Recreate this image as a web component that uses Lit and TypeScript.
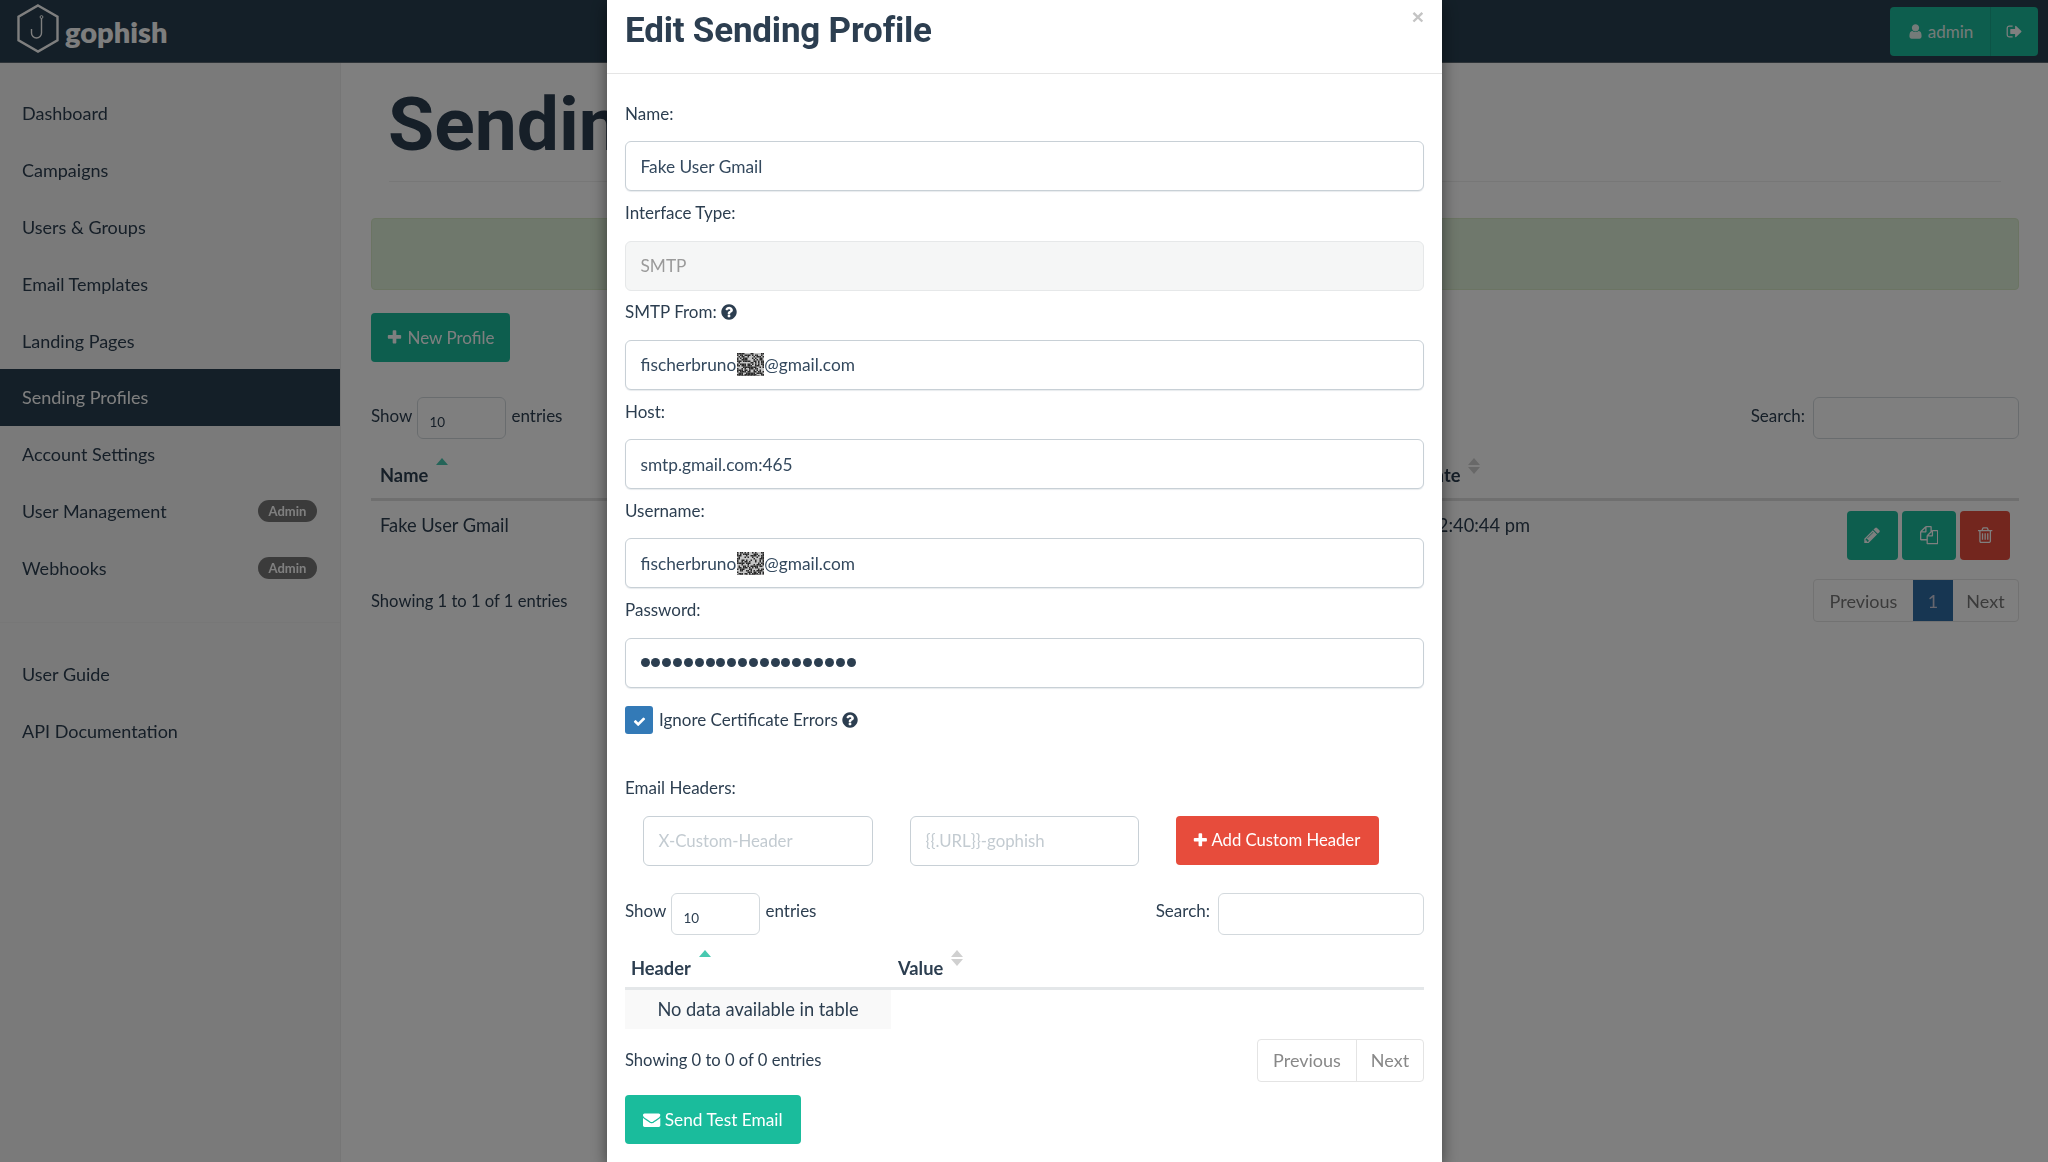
import { LitElement, html, css, svg } from "lit";
import { customElement } from "lit/decorators.js";

const P = {
  plus: "M1600 736v192q0 40-28 68t-68 28h-416v416q0 40-28 68t-68 28h-192q-40 0-68-28t-28-68v-416h-416q-40 0-68-28t-28-68v-192q0-40 28-68t68-28h416v-416q0-40 28-68t68-28h192q40 0 68 28t28 68v416h416q40 0 68 28t28 68z",
  user: "M1536 1399q0 109-62.5 187t-150.5 78h-854q-88 0-150.5-78t-62.5-187q0-85 8.5-160.5t31.5-152 58.5-131 94-89 134.5-34.5q131 128 313 128t313-128q76 0 134.5 34.5t94 89 58.5 131 31.5 152 8.5 160.5zm-256-887q0 159-112.5 271.5t-271.5 112.5-271.5-112.5-112.5-271.5 112.5-271.5 271.5-112.5 271.5 112.5 112.5 271.5z",
  out: "M704 1440q0 4 1 20t.5 26.5-3 23.5-10 19.5-20.5 6.5h-320q-119 0-203.5-84.5t-84.5-203.5v-704q0-119 84.5-203.5t203.5-84.5h320q13 0 22.5 9.5t9.5 22.5q0 4 1 20t.5 26.5-3 23.5-10 19.5-20.5 6.5h-320q-66 0-113 47t-47 113v704q0 66 47 113t113 47h312l11.5 1 11.5 3 8 5.5 7 9 2 13.5zm928-544q0 26-19 45l-544 544q-19 19-45 19t-45-19-19-45v-288h-448q-26 0-45-19t-19-45v-384q0-26 19-45t45-19h448v-288q0-26 19-45t45-19 45 19l544 544q19 19 19 45z",
  help: "M1024 1376v-192q0-14-9-23t-23-9h-192q-14 0-23 9t-9 23v192q0 14 9 23t23 9h192q14 0 23-9t9-23zm256-672q0-88-55.5-163t-138.5-116-170-41q-243 0-371 213-15 24 8 42l132 100q7 6 19 6 16 0 25-12 53-68 86-92 34-24 86-24 48 0 85.5 26t37.5 59q0 38-20 61t-68 45q-63 28-115.5 86.5t-52.5 125.5v36q0 14 9 23t23 9h192q14 0 23-9t9-23q0-19 21.5-49.5t54.5-49.5q32-18 49-28.5t46-35 44.5-48 28-60.5 12.5-81zm384 192q0 209-103 385.5t-279.5 279.5-385.5 103-385.5-103-279.5-279.5-103-385.5 103-385.5 279.5-279.5 385.5-103 385.5 103 279.5 279.5 103 385.5z",
  pencil: "M491 1536l91-91-235-235-91 91v107h128v128h107zm523-928q0-22-22-22-10 0-17 7l-542 542q-7 7-7 17 0 22 22 22 10 0 17-7l542-542q7-7 7-17zm-54-192l416 416-832 832h-416v-416zm683 96q0 53-37 90l-166 166-416-416 166-165q36-38 90-38 53 0 91 38l235 234q37 39 37 91z",
  files: "M1696 384q40 0 68 28t28 68v1216q0 40-28 68t-68 28h-960q-40 0-68-28t-28-68v-288h-544q-40 0-68-28t-28-68v-672q0-40 20-88t48-76l408-408q28-28 76-48t88-20h416q40 0 68 28t28 68v328q68-40 128-40h416zm-544 213l-299 299h299v-299zm-640-384l-299 299h299v-299zm196 647l316-316v-416h-384v416q0 40-28 68t-68 28h-416v640h512v-256q0-40 20-88t48-76zm956 804v-1152h-384v416q0 40-28 68t-68 28h-416v640h896z",
  trash: "M704 736v576q0 14-9 23t-23 9h-64q-14 0-23-9t-9-23v-576q0-14 9-23t23-9h64q14 0 23 9t9 23zm256 0v576q0 14-9 23t-23 9h-64q-14 0-23-9t-9-23v-576q0-14 9-23t23-9h64q14 0 23 9t9 23zm256 0v576q0 14-9 23t-23 9h-64q-14 0-23-9t-9-23v-576q0-14 9-23t23-9h64q14 0 23 9t9 23zm128 724v-948h-896v948q0 22 7 40.5t14.5 27 10.5 8.5h832q3 0 10.5-8.5t14.5-27 7-40.5zm-672-1076h448l-48-117q-7-9-17-11h-317q-10 2-17 11zm928 32v64q0 14-9 23t-23 9h-96v948q0 83-47 143.5t-113 60.5h-832q-66 0-113-58.5t-47-141.5v-952h-96q-14 0-23-9t-9-23v-64q0-14 9-23t23-9h309l70-167q15-37 54-63t79-26h320q40 0 79 26t54 63l70 167h309q14 0 23 9t9 23z",
  mail: "M1792 710v794q0 66-47 113t-113 47h-1472q-66 0-113-47t-47-113v-794q44 49 101 87 362 246 497 345 57 42 92.5 65.5t94.5 48 110 24.5h2q51 0 110-24.5t94.5-48 92.5-65.5q170-123 498-345 57-39 100-87zm0-294q0 79-49 151t-122 123q-376 261-468 325-10 7-42.5 30.5t-54 38-52 32.5-57.5 27-50 9h-2q-23 0-50-9t-57.5-27-52-32.5-54-38-42.5-30.5q-91-64-262-182.5t-205-142.5q-62-42-117-115.5t-55-136.5q0-78 41.5-130t118.5-52h1472q65 0 112.5 47t47.5 113z",
  check: "M1671 566q0 40-28 68l-724 724-136 136q-28 28-68 28t-68-28l-136-136-362-362q-28-28-28-68t28-68l136-136q28-28 68-28t68 28l294 295 656-657q28-28 68-28t68 28l136 136q28 28 28 68z",
};

const icon = (d: string, cls = "") => html`<svg class="ic ${cls}" viewBox="0 0 1792 1792" aria-hidden="true"><path fill="currentColor" d=${d}></path></svg>`;

function noise(seed: number) {
  let s = seed;
  const rects = [];
  for (let y = 0; y < 23; y += 1.5) {
    for (let x = 0; x < 27; x += 1.5) {
      s = (s * 1103515245 + 12345) & 0x7fffffff;
      if ((s >> 12) % 100 < 50) rects.push(svg`<rect x=${x} y=${y} width="1.5" height="1.5"></rect>`);
    }
  }
  return html`<svg class="noise" viewBox="0 0 27 23" aria-hidden="true"><rect width="27" height="23" fill="#c4c4c4"></rect><g fill="#2a2a2a">${rects}</g></svg>`;
}

const sorter = (active = false) => html`<span class="sort ${active ? "on" : ""}"><i class="up"></i>${active ? "" : html`<i class="down"></i>`}</span>`;

@customElement("app-root")
export class AppRoot extends LitElement {
  static styles = css`
    :host { display: block; width: 2048px; height: 1162px; overflow: hidden; position: relative; font-family: "Lato", "Liberation Sans", sans-serif; font-size: 17px; color: #2c3e50; background: #fff; }
    * { box-sizing: border-box; }
    .ic { width: 1em; height: 1em; display: inline-block; vertical-align: -0.12em; flex: none; }
    .page { filter: blur(0.5px); height: 1162px; }
    .top { height: 63px; background: #283f50; display: flex; align-items: center; justify-content: space-between; padding: 0 10px 0 17px; border-bottom: 1px solid #5b6770; }
    .brand { display: flex; align-items: center; gap: 6px; font: 800 29px Lato, sans-serif; color: #fdfdfd; }
    .brand svg { width: 42px; height: 49px; margin-top: -5px; }
    .account { display: flex; height: 49px; }
    .btn { background: #1abc9c; color: #fff; border: 0; border-radius: 4px; display: inline-flex; align-items: center; justify-content: center; font: inherit; gap: 4px; padding: 0; }
    .adm { width: 101px; border-radius: 4px 0 0 4px; border-right: 1px solid #18a88c; color: #e8f6f3; }
    .logout { width: 47px; border-radius: 0 4px 4px 0; }
    .layout { display: flex; height: 1099px; }
    .side { width: 341px; flex: none; background: #f5f5f5; border-right: 1px solid #ececec; padding-top: 21.5px; font-size: 18px; }
    .nav { height: 56.9px; display: flex; align-items: center; justify-content: space-between; padding: 0 23px 0 22px; color: #2c3e50; }
    .nav.on { background: #283f50; color: #fff; height: 57px; }
    .badge { width: 59px; height: 22px; border-radius: 11px; background: #777; color: #fff; font-size: 13px; font-weight: 700; display: flex; align-items: center; justify-content: center; }
    .sep { border-top: 1px solid #eee; margin-top: 25px; height: 24px; }
    .main { flex: 1; padding: 0 29px 0 30px; }
    .title { font: 700 75px/1 Roboto, sans-serif; margin: 24px 0 0 17px; height: 73px; white-space: nowrap; color: #2c3e50; }
    .rule { border-top: 1px solid #eee; margin: 21px 18px 0 18px; }
    .alert { height: 72px; margin-top: 36px; background: #dff0d8; border: 1px solid #d6e9c6; border-radius: 4px; }
    .new { width: 139px; height: 49px; margin-top: 23px; border-radius: 4px; }
    .tools { display: flex; align-items: flex-start; justify-content: space-between; }
    .len { display: flex; align-items: center; gap: 5px; }
    .sel { width: 89px; height: 42px; border: 1px solid #d3d9dd; border-radius: 6px; font-size: 13.5px; line-height: 17px; padding: 16px 0 0 11px; background: #fff; }
    .find { display: flex; align-items: center; gap: 8px; }
    .searchbox { width: 206px; height: 42px; border: 1px solid #d3d9dd; border-radius: 6px; background: #fff; }
    .t { position: relative; top: -3px; }
    .bgtools { margin-top: 35px; }
    .bgrow { display: flex; }
    .bghead { height: 62px; border-bottom: 3px solid #dfdfdf; align-items: flex-end; font-weight: 700; font-size: 18.3px; padding-bottom: 12px; }
    .bgname { padding-left: 9px; width: 948px; flex: none; }
    .bghead .bgname { width: 934px; }
    .sort { position: relative; display: inline-block; }
    .sort i { position: absolute; left: 8px; width: 0; height: 0; border-left: 6px solid transparent; border-right: 6px solid transparent; }
    .sort .up { top: -24px; border-bottom: 7px solid #d0d0d0; }
    .sort .down { top: -15px; border-top: 7px solid #d0d0d0; }
    .sort.on .up { border-bottom-color: #48c9b0; }
    .bgbody { height: 75px; padding-top: 10px; font-size: 18.3px; }
    .bgbody .bgname, .bgbody .date { padding-top: 3px; }
    .date { width: 211px; text-align: right; white-space: nowrap; flex: none; }
    .acts { display: flex; gap: 4px; margin: 0 9px 0 auto; }
    .acts .btn { height: 49px; }
    .a1 { width: 51px; } .a2 { width: 54px; } .a3 { width: 50px; background: #e74c3c; }
    .foot { display: flex; justify-content: space-between; align-items: center; margin-top: 3px; }
    .foot > span:first-child, .mfoot > span:first-child { font-size: 16.6px; }
    .pager { display: flex; height: 43px; border: 1px solid #e4e4e4; border-radius: 4px; color: #777; background: #fff; font-size: 18px; }
    .pager span { display: flex; align-items: center; justify-content: center; }
    .p1 { width: 99px; } .p2 { width: 40px; background: #2e6da4; color: #ccd; } .p3 { width: 65px; }
    .backdrop { position: absolute; inset: 0; background: rgba(0,0,0,.5); }
    .modal { position: absolute; left: 607px; top: 0; width: 835px; height: 1162px; background: #fff; box-shadow: 0 5px 15px rgba(0,0,0,.5); filter: blur(0.35px); }
    .mhead { height: 74px; border-bottom: 1px solid #e5e5e5; padding: 0 18px; display: flex; justify-content: space-between; }
    .mhead h3 { margin: 9px 0 0; font: 700 35px/44px Roboto, sans-serif; color: #2c3e50; letter-spacing: -0.2px; }
    .x { font: 700 21px/1 "Liberation Sans", sans-serif; color: #c4c4c4; margin-top: 6px; }
    .mbody { padding: 18px 18px 0; }
    label { display: flex; align-items: center; height: 49.3px; padding-bottom: 7px; gap: 3px; }
    .help { width: 18px; height: 18px; color: #2c3e50; }
    .field { height: 50px; border: 1px solid #c8d0d6; border-radius: 6px; padding: 0 14.5px; display: flex; align-items: center; color: #34495e; background: #fff; box-shadow: 0 1px 1px #e8ebee; font-size: 17.3px; }
    .field.dis { background: #f5f6f6; border-color: #e6e8e9; color: #9a9a9a; box-shadow: none; }
    .noise { width: 27px; height: 23px; flex: none; margin-left: 1px; }
    .pw { font-size: 0; }
    .dot { width: 9px; height: 9px; border-radius: 50%; background: #2c3e50; margin-right: 1.85px; flex: none; }
    .chk { display: flex; align-items: center; gap: 6px; margin-top: 18px; }
    .chk .help { margin-left: -3px; }
    .box { width: 28px; height: 28px; border-radius: 3px; background: #337ab7; color: #fff; display: flex; align-items: center; justify-content: center; font-size: 13px; }
    .box .ic { margin-top: 3px; }
    .eh { margin-top: 29px; height: 50px; padding-bottom: 0; }
    .hdr { display: grid; grid-template-columns: 230px 229px 203px; column-gap: 37px; padding-left: 18px; margin-top: 3px; }
    .ph { color: #c3cbd1; box-shadow: none; font-size: 16.8px; }
    .red { background: #e74c3c; height: 49px; font-size: 16.7px; gap: 3px; padding-right: 3px; }
    .mt { margin-top: 27px; display: flex; justify-content: space-between; }
    .mhd { display: flex; height: 55px; border-bottom: 3px solid #e4e7e9; align-items: flex-end; font-weight: 700; font-size: 18.3px; padding-bottom: 8px; }
    .mhd .h1 { width: 273px; padding-left: 6px; }
    .mhd .sort i { transform: translateY(-1px); }
    .empty { width: 266px; height: 39px; background: #f9f9f9; display: flex; align-items: center; justify-content: center; font-size: 18.3px; }
    .mfoot { display: flex; justify-content: space-between; align-items: center; margin-top: 10px; }
    .mpager { display: flex; height: 43px; border: 1px solid #e4e4e4; border-radius: 4px; color: #888; font-size: 18px; }
    .mpager span { display: flex; align-items: center; justify-content: center; }
    .m1 { width: 99px; border-right: 1px solid #e4e4e4; } .m2 { width: 66px; }
    .send { width: 176px; height: 49px; margin-top: 13px; font-size: 17.3px; }
  `;

  render() {
    const items = ["Dashboard", "Campaigns", "Users & Groups", "Email Templates", "Landing Pages"];
    return html`
      <div class="page">
        <header class="top">
          <div class="brand">
            <svg viewBox="0 0 42 49" fill="none" stroke="#fff" stroke-width="2.4"><path d="M21 1.5 40.5 12.7V36.3L21 47.5 1.5 36.3V12.7Z"></path><path stroke-width="1.4" d="M24.5 14V29a5 5 0 0 1-10 0V25"></path><circle cx="24.5" cy="13" r="1.4" stroke-width="1"></circle></svg>
            <span>gophish</span>
          </div>
          <div class="account">
            <div class="btn adm">${icon(P.user)}admin</div>
            <div class="btn logout">${icon(P.out)}</div>
          </div>
        </header>
        <div class="layout">
          <aside class="side">
            ${items.map((t) => html`<div class="nav">${t}</div>`)}
            <div class="nav on">Sending Profiles</div>
            <div class="nav">Account Settings</div>
            <div class="nav">User Management<span class="badge">Admin</span></div>
            <div class="nav">Webhooks<span class="badge">Admin</span></div>
            <div class="sep"></div>
            <div class="nav">User Guide</div>
            <div class="nav">API Documentation</div>
          </aside>
          <main class="main">
            <h1 class="title">Sendin</h1>
            <div class="rule"></div>
            <div class="alert"></div>
            <button class="btn new">${icon(P.plus)}New Profile</button>
            <div class="tools bgtools">
              <div class="len"><span class="t">Show</span><div class="sel">10</div><span class="t">entries</span></div>
              <div class="find"><span class="t">Search:</span><div class="searchbox"></div></div>
            </div>
            <div class="bgrow bghead">
              <div class="bgname">Name${sorter(true)}</div>
              <div>Last Modified Date${sorter()}</div>
            </div>
            <div class="bgrow bgbody">
              <div class="bgname">Fake User Gmail</div>
              <div class="date">12:40:44 pm</div>
              <div class="acts">
                <div class="btn a1">${icon(P.pencil)}</div>
                <div class="btn a2">${icon(P.files)}</div>
                <div class="btn a3">${icon(P.trash)}</div>
              </div>
            </div>
            <div class="foot">
              <span>Showing 1 to 1 of 1 entries</span>
              <div class="pager"><span class="p1">Previous</span><span class="p2">1</span><span class="p3">Next</span></div>
            </div>
          </main>
        </div>
      </div>
      <div class="backdrop"></div>
      <section class="modal">
        <div class="mhead"><h3>Edit Sending Profile</h3><span class="x">×</span></div>
        <div class="mbody">
          <label>Name:</label>
          <div class="field">Fake User Gmail</div>
          <label>Interface Type:</label>
          <div class="field dis">SMTP</div>
          <label>SMTP From: ${icon(P.help, "help")}</label>
          <div class="field">fischerbruno${noise(7)}@gmail.com</div>
          <label>Host:</label>
          <div class="field">smtp.gmail.com:465</div>
          <label>Username:</label>
          <div class="field">fischerbruno${noise(23)}@gmail.com</div>
          <label>Password:</label>
          <div class="field pw">${Array.from({ length: 20 }, () => html`<i class="dot"></i>`)}</div>
          <div class="chk"><div class="box">${icon(P.check)}</div><span>Ignore Certificate Errors</span>${icon(P.help, "help")}</div>
          <label class="eh">Email Headers:</label>
          <div class="hdr">
            <div class="field ph">X-Custom-Header</div>
            <div class="field ph">{{.URL}}-gophish</div>
            <button class="btn red">${icon(P.plus)}Add Custom Header</button>
          </div>
          <div class="mt">
            <div class="len"><span class="t">Show</span><div class="sel">10</div><span class="t">entries</span></div>
            <div class="find"><span class="t">Search:</span><div class="searchbox"></div></div>
          </div>
          <div class="mhd"><div class="h1">Header${sorter(true)}</div><div>Value${sorter()}</div></div>
          <div class="empty">No data available in table</div>
          <div class="mfoot">
            <span>Showing 0 to 0 of 0 entries</span>
            <div class="mpager"><span class="m1">Previous</span><span class="m2">Next</span></div>
          </div>
          <button class="btn send">${icon(P.mail)}Send Test Email</button>
        </div>
      </section>
    `;
  }
}
